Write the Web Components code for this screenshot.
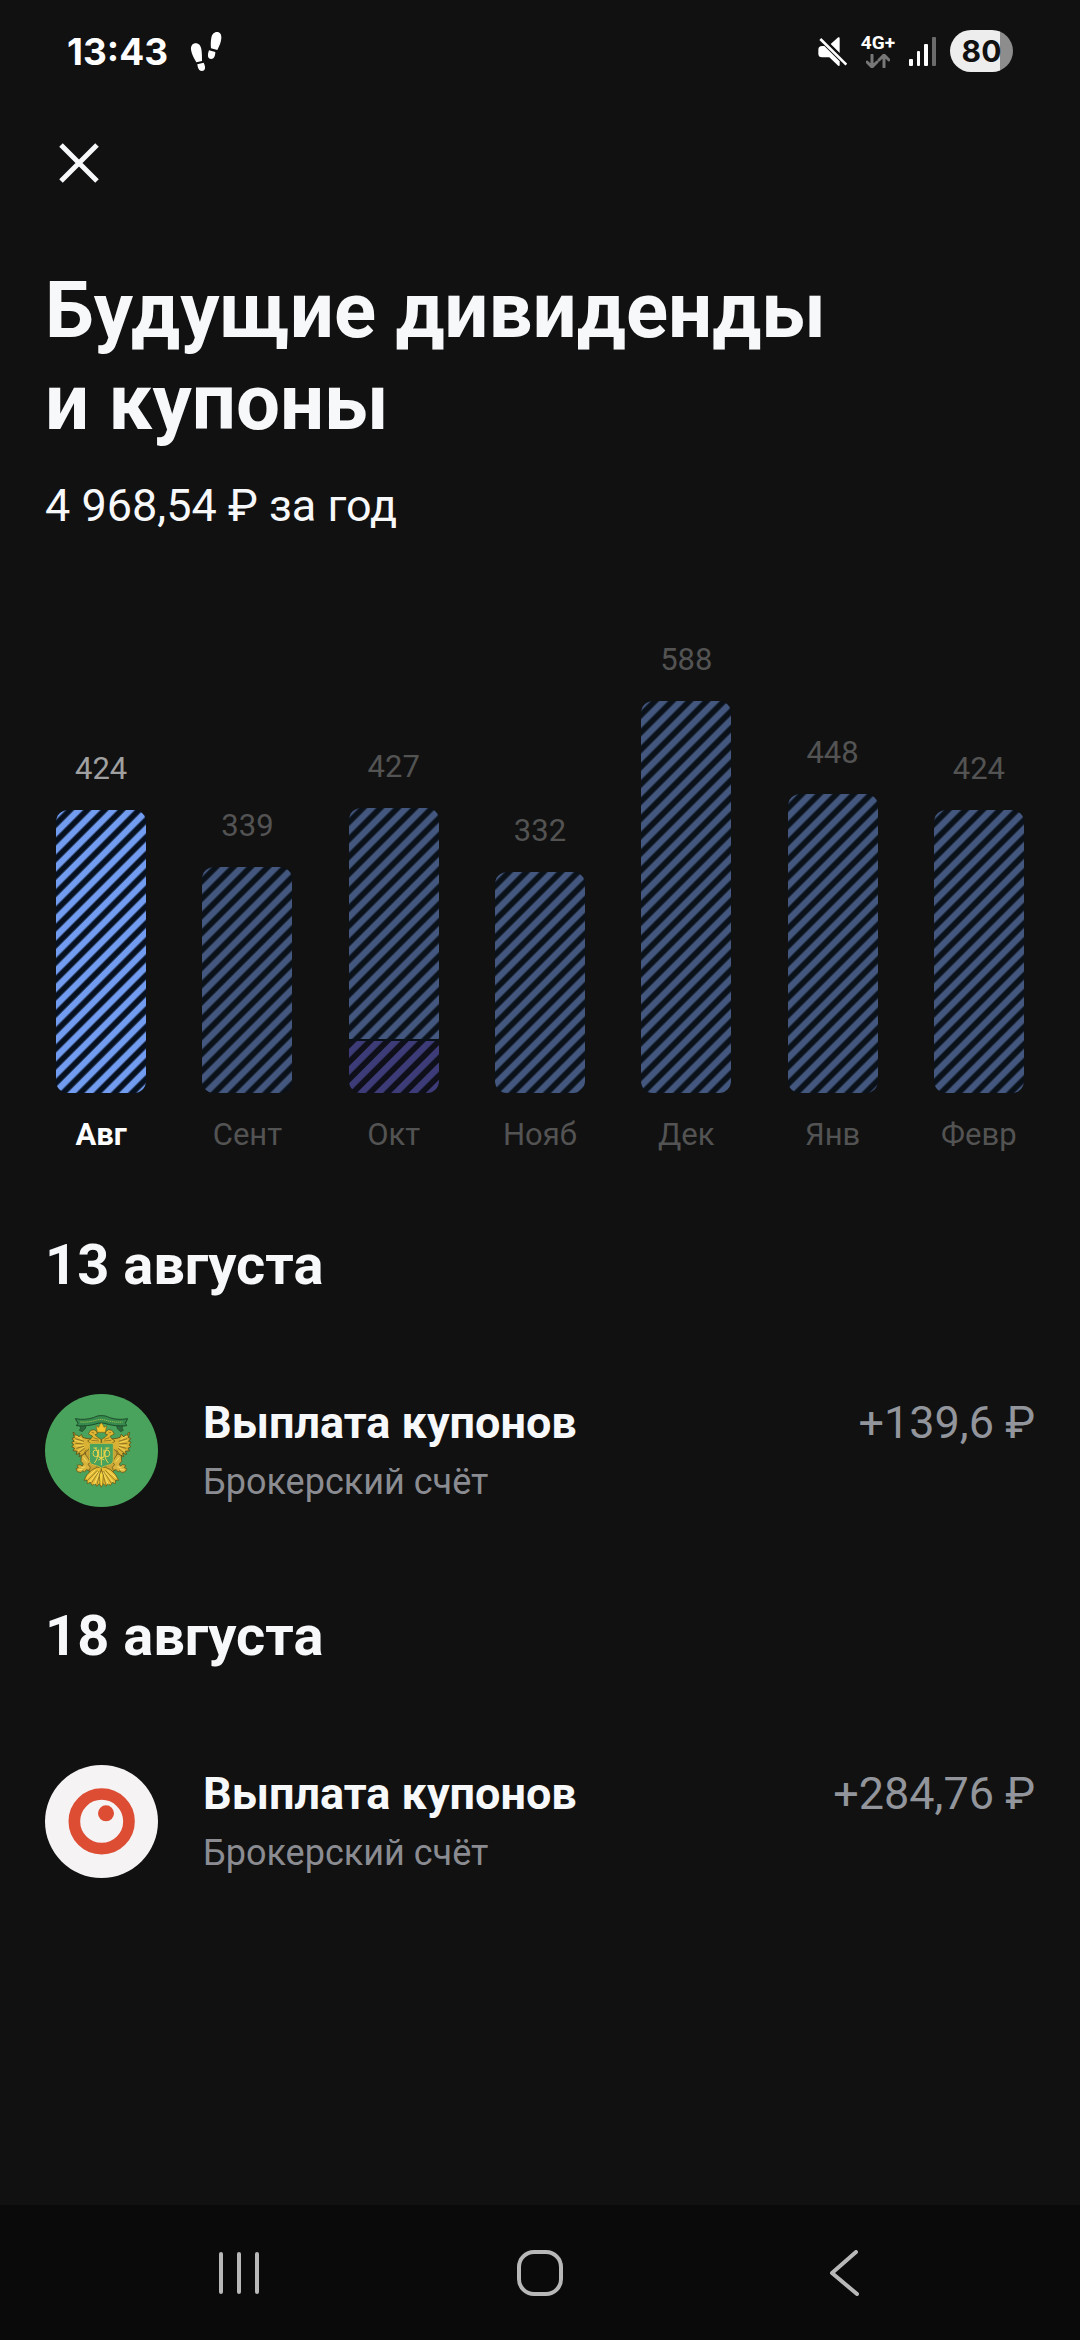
<!DOCTYPE html>
<html lang="ru">
<head>
<meta charset="utf-8">
<meta name="viewport" content="width=device-width, initial-scale=1">
<title>Будущие дивиденды и купоны</title>
<style>
  body {
    margin: 0;
    background: #111;
    color: #f7f8fa;
    font-family: Roboto, "Noto Sans", sans-serif;
  }
</style>
</head>
<body>
<dividends-page>
  <status-bar slot="status" time="13:43" battery="80"></status-bar>
  <page-header slot="header">
    Будущие дивиденды<br>и&nbsp;купоны
    <span slot="total">4&nbsp;968,54&nbsp;₽ за год</span>
  </page-header>
  <bar-chart>
    <chart-bar value="424" month="Авг" active></chart-bar>
    <chart-bar value="339" month="Сент"></chart-bar>
    <chart-bar value="427" month="Окт" dividends="78"></chart-bar>
    <chart-bar value="332" month="Нояб"></chart-bar>
    <chart-bar value="588" month="Дек"></chart-bar>
    <chart-bar value="448" month="Янв"></chart-bar>
    <chart-bar value="424" month="Февр"></chart-bar>
  </bar-chart>
  <payment-day>
    <span slot="date">13 августа</span>
    <payment-row>
      <minfin-logo slot="logo"></minfin-logo>
      Выплата купонов
      <span slot="account">Брокерский счёт</span>
      <span slot="amount">+139,6&nbsp;₽</span>
    </payment-row>
  </payment-day>
  <payment-day>
    <span slot="date">18 августа</span>
    <payment-row>
      <ring-logo slot="logo"></ring-logo>
      Выплата купонов
      <span slot="account">Брокерский счёт</span>
      <span slot="amount">+284,76&nbsp;₽</span>
    </payment-row>
  </payment-day>
  <system-nav slot="nav"></system-nav>
</dividends-page>

<script>
class DividendsPage extends HTMLElement {
  constructor () {
    super()
    this.shadow = this.attachShadow({ mode: 'open' })
  }

  connectedCallback () {
    this.render()
  }

  render () {
    this.shadow.innerHTML =
      /*html*/`
      <style>
        :host {
          display: flex;
          flex-direction: column;
          min-height: 100vh;
        }

        main {
          flex: 1;
        }
      </style>

      <slot name="status"></slot>
      <slot name="header"></slot>
      <main><slot></slot></main>
      <slot name="nav"></slot>`
  }
}

class StatusBar extends HTMLElement {
  constructor () {
    super()
    this.shadow = this.attachShadow({ mode: 'open' })
  }

  connectedCallback () {
    this.render()
  }

  render () {
    const battery = this.getAttribute('battery')

    this.shadow.innerHTML =
      /*html*/`
      <style>
        :host {
          display: flex;
          align-items: center;
          justify-content: space-between;
          height: 102px;
          padding: 0 67px;
          color: #fff;
          font-family: Inter, Roboto, sans-serif;
          font-weight: 600;
        }

        svg {
          display: block;
        }

        .left, .right {
          display: flex;
          align-items: center;
        }

        .left {
          gap: 20px;
          font-size: 37px;
          font-weight: 700;
        }

        .right {
          gap: 14px;
        }

        .network {
          display: flex;
          flex-direction: column;
          align-items: center;
          gap: 2px;
          font-family: Roboto, sans-serif;
          font-size: 19px;
          font-weight: 700;
          line-height: 18px;
        }

        .battery {
          width: 63px;
          border-radius: 21px;
          background: linear-gradient(90deg, #ededed ${battery}%, #8d8d8d ${battery}%);
          color: #111;
          font-size: 30px;
          font-weight: 700;
          line-height: 42px;
          text-align: center;
        }
      </style>

      <div class="left">
        <span>${this.getAttribute('time')}</span>
        <svg width="37" height="45" viewBox="440 60 111 135" fill="#fff" aria-hidden="true">
          <path d="M449 122c-1-13 6-19 14-19 10 0 15 7 17 17 2 12 2 23 2 36l-17 4c-7-13-14-24-16-38z"/>
          <path d="M468 166l19-5c4 8 6 17 2 22-4 4-11 4-15 0s-5-10-6-17z"/>
          <path d="M540 88c1-12-4-19-13-19s-15 7-17 17c-2 11-2 21-1 32l19 5c6-12 11-22 12-35z"/>
          <path d="M503 124l19 5c0 8-2 15-6 19-4 3-10 3-13 0-5-5-3-16 0-24z"/>
        </svg>
      </div>
      <div class="right">
        <svg width="29" height="29" viewBox="81 82 87 87" aria-hidden="true">
          <path fill="#fff" d="M119 103l21-19c3-2 6-1 6 2v44zM93 109h7l46 46v10c0 4-3 5-6 2l-25-24H93c-7 0-11-4-11-10v-13c0-7 4-11 11-11z"/>
          <path stroke="#111" stroke-width="5" d="M93 83l78 76"/>
          <path stroke="#fff" stroke-width="8" d="M88 88l78 77"/>
        </svg>
        <div class="network">
          <span>4G+</span>
          <svg width="24" height="14" viewBox="0 0 24 14" fill="none" stroke="#777" stroke-width="3" stroke-linecap="round" stroke-linejoin="round" aria-hidden="true">
            <path d="M6 1v11M1 8l5 5 5-5M18 13V2M13 6l5-5 5 5"/>
          </svg>
        </div>
        <svg width="27" height="29" viewBox="0 0 27 29" fill="#fff" aria-hidden="true">
          <rect y="22" width="4" height="7" rx="1"/>
          <rect x="8" y="14" width="3" height="15" rx="1"/>
          <rect x="15" y="7" width="4" height="22" rx="1"/>
          <rect x="23" width="4" height="29" rx="1" fill="#6b6b6b"/>
        </svg>
        <span class="battery">${battery}</span>
      </div>`
  }
}

class PageHeader extends HTMLElement {
  constructor () {
    super()
    this.shadow = this.attachShadow({ mode: 'open' })
  }

  connectedCallback () {
    this.render()
  }

  render () {
    this.shadow.innerHTML =
      /*html*/`
      <style>
        :host {
          display: block;
          padding: 19px 45px 0;
        }

        button {
          display: flex;
          align-items: center;
          justify-content: center;
          width: 84px;
          height: 84px;
          margin: 0 0 60px -8px;
          padding: 0;
          border: 0;
          background: none;
          color: inherit;
        }

        h1 {
          margin: 0 0 27px;
          font-size: 78px;
          font-weight: 700;
          line-height: 92px;
        }

        p {
          margin: 0;
          font-size: 45px;
          line-height: 60px;
        }
      </style>

      <button type="button" aria-label="Закрыть">
        <svg width="40" height="40" viewBox="0 0 40 40" fill="none" stroke="currentColor" stroke-width="5" aria-hidden="true">
          <path d="M2 2l36 36M38 2L2 38"/>
        </svg>
      </button>
      <h1><slot></slot></h1>
      <p><slot name="total"></slot></p>`
  }
}

class BarChart extends HTMLElement {
  constructor () {
    super()
    this.shadow = this.attachShadow({ mode: 'open' })
  }

  connectedCallback () {
    this.render()
  }

  render () {
    this.shadow.innerHTML =
      /*html*/`
      <style>
        :host {
          display: grid;
          grid-auto-columns: 1fr;
          grid-auto-flow: column;
          align-items: end;
          margin-top: 104px;
          padding: 0 28px;
        }
      </style>

      <slot></slot>`
  }
}

class ChartBar extends HTMLElement {
  constructor () {
    super()
    this.shadow = this.attachShadow({ mode: 'open' })
  }

  connectedCallback () {
    this.render()
  }

  // two pixels for every three roubles
  scale (value) {
    return Math.round(value * 2 / 3)
  }

  stripes (name, height, shift) {
    return /*html*/`
      <svg class="${name}" height="${height}" aria-hidden="true">
        <pattern id="${name}" width="12.2" height="12.2" patternUnits="userSpaceOnUse" patternTransform="rotate(45)">
          <rect x="${shift}" width="6.4" height="12.2"/>
        </pattern>
        <rect class="back" width="100%" height="100%"/>
        <rect width="100%" height="100%" fill="url(#${name})"/>
      </svg>`
  }

  render () {
    const value = Number(this.getAttribute('value'))
    const dividends = this.scale(Number(this.getAttribute('dividends')))
    const total = this.scale(value)
    const coupons = dividends ? total - dividends - 2 : total

    this.shadow.innerHTML =
      /*html*/`
      <style>
        :host {
          display: block;
          --value: #535353;
          --month: #535353;
          --back: #0b1119;
          --line: #43577f;
        }

        :host([active]) {
          --value: #a0a0a0;
          --month: #fff;
          --back: #07101f;
          --line: #719cf0;
        }

        button {
          display: flex;
          flex-direction: column;
          align-items: center;
          width: 100%;
          padding: 0;
          border: 0;
          background: none;
          font: inherit;
          font-size: 31px;
          line-height: 40px;
        }

        .value {
          color: var(--value);
        }

        .month {
          color: var(--month);
        }

        :host([active]) .month {
          font-weight: 700;
        }

        .bar {
          display: flex;
          flex-direction: column;
          gap: 2px;
          width: 90px;
          margin: 21px 0 22px;
          border-radius: 12px;
          background: var(--back);
          overflow: hidden;
        }

        svg {
          display: block;
          width: 100%;
        }

        svg .back {
          fill: var(--back);
        }

        pattern rect {
          fill: var(--line);
        }

        .dividends {
          --back: #0e0f18;
          --line: #3d3c78;
        }
      </style>

      <button type="button">
        <span class="value">${value}</span>
        <span class="bar">
          ${this.stripes('coupons', coupons, 0.6)}
          ${dividends ? this.stripes('dividends', dividends, 5.6) : ''}
        </span>
        <span class="month">${this.getAttribute('month')}</span>
      </button>`
  }
}

class PaymentDay extends HTMLElement {
  constructor () {
    super()
    this.shadow = this.attachShadow({ mode: 'open' })
  }

  connectedCallback () {
    this.render()
  }

  render () {
    this.shadow.innerHTML =
      /*html*/`
      <style>
        :host {
          display: block;
          padding: 76px 45px 19px;
        }

        h2 {
          margin: 0 0 95px;
          font-size: 56px;
          font-weight: 700;
          line-height: 68px;
        }
      </style>

      <section>
        <h2><slot name="date"></slot></h2>
        <slot></slot>
      </section>`
  }
}

class PaymentRow extends HTMLElement {
  constructor () {
    super()
    this.shadow = this.attachShadow({ mode: 'open' })
  }

  connectedCallback () {
    this.render()
  }

  render () {
    this.shadow.innerHTML =
      /*html*/`
      <style>
        :host {
          display: flex;
          align-items: center;
          gap: 45px;
        }

        .text {
          display: grid;
          flex: 1;
          grid-template-columns: 1fr auto;
          row-gap: 7px;
        }

        .name, .amount {
          font-size: 45px;
          line-height: 56px;
        }

        .name {
          font-weight: 700;
        }

        .amount {
          color: #92959b;
        }

        .account {
          color: #8a8c92;
          font-size: 36px;
          line-height: 48px;
        }
      </style>

      <slot name="logo"></slot>
      <div class="text">
        <span class="name"><slot></slot></span>
        <span class="amount"><slot name="amount"></slot></span>
        <span class="account"><slot name="account"></slot></span>
      </div>`
  }
}

class MinfinLogo extends HTMLElement {
  constructor () {
    super()
    this.shadow = this.attachShadow({ mode: 'open' })
  }

  connectedCallback () {
    this.render()
  }

  render () {
    this.shadow.innerHTML =
      /*html*/`
      <style>
        :host {
          display: block;
          width: 113px;
          height: 113px;
        }

        svg {
          display: block;
          width: 100%;
          height: 100%;
        }
      </style>

      <svg viewBox="15 12 339 339" stroke-linejoin="round" aria-hidden="true">
        <defs>
          <!-- left half of the eagle, mirrored for the right one -->
          <g id="half">
            <path fill="#2c6a3c" stroke="#1c4a2a" stroke-width="2" d="M116 103l22 4-2 9-10 9-8-4 4-7z"/>
            <path fill="#d9b135" stroke="#5b4c14" stroke-width="2.500" d="M99 127l6 3-1 7 8-2 4 6 8-8 4 9 10 3 15 2v13l-4 8-2 14-8 6-7 14-8 3 2-10-9 5 3-10-12 3 4-9-13-2 5-7-9-5 6-5-6-8 7-3-6-9 7-2z"/>
            <path fill="none" stroke="#6b5516" stroke-width="2" d="M106 146l26 8M106 160l25 2M109 175l23-6M115 189l19-14M126 199l13-20"/>
            <path fill="none" stroke="#f3d552" stroke-width="3" d="M105 151l25 7M107 168l25-3M113 183l20-12M106 137l21 11"/>
            <path fill="#e0b834" stroke="#5b4c14" stroke-width="2" d="M145 132l7-11 10-2 8 5 2 8-7 2 8 8 10 6v12h-31l-9-7 10-7 5-7-7-4z"/>
            <path fill="none" stroke="#775b16" stroke-width="2" d="M155 127l7 2M154 151l23 2M160 143l15 5"/>
            <path fill="#c9a435" stroke="#5b4c14" stroke-width="2" d="M137 186l11-10v32l7 12 14 8 14 10v8l-26 4-14-10-8-20z"/>
            <path fill="#d8b33c" stroke="#5b4c14" stroke-width="2" d="M124 197l11-6 9 13 7 13-7 6 7 9-3 9-9-2-5 7-6-4-5 6-11-3-4-9 7-3-4-7 9-2 7 4 3-6-7-8z"/>
            <path fill="none" stroke="#f6df67" stroke-width="3" d="M130 202l10 13M124 234l12-4M114 240l14-2"/>
            <path fill="#e6bd35" stroke="#5b4c14" stroke-width="2" d="M172 232l-17 8-14 14-9 17 9-1 1 11 9-4 5 9 9-5 5 8 8-8 6 8V232z"/>
            <path fill="none" stroke="#73601d" stroke-width="2" d="M172 241l-30 31M177 243l-23 37M181 244l-11 43"/>
            <path fill="none" stroke="#f9e068" stroke-width="3" d="M166 240l-27 24M174 245l-25 31M179 247l-16 36"/>
          </g>
        </defs>
        <circle cx="184.500" cy="181.500" r="169.500" fill="#49a35c"/>
        <use href="#half"/>
        <use href="#half" transform="matrix(-1 0 0 1 368 0)"/>
        <path fill="#368a4e" stroke="#1c4a2a" stroke-width="3" d="M106 86c20 4 38 2 54-3 10-5 15-6 24-6s16 1 25 6c16 5 33 7 54 3l-7 14c3 3 3 4 4 7-27 2-45-1-59-5-12-4-22-4-34 0-14 4-31 7-58 5l5-7z"/>
        <path fill="none" stroke="#9cc34d" stroke-width="3" stroke-dasharray="4 2" d="M121 96c25 2 39-3 50-6 9-2 17-2 27 1 12 3 28 7 50 5"/>
        <path fill="#f2c52e" stroke="#7a6418" stroke-width="2" d="M168 107l8 5 3-8 5-5 5 5 3 8 8-5-4 20h-24z"/>
        <path fill="#49a35c" stroke="#d9ba3a" stroke-width="3" d="M148 160h72v49c0 9-4 14-14 16-10 3-17 5-22 9-5-4-12-6-22-9-10-2-14-7-14-16z"/>
        <g fill="none" stroke="#eed34b" stroke-width="3">
          <path d="M166 174c10 12 10 30-3 45M202 174c-10 12-10 30 3 45"/>
          <ellipse cx="167" cy="190" rx="8" ry="10"/>
          <ellipse cx="201" cy="190" rx="8" ry="10"/>
          <path d="M184 172v54M176 178v21c0 5 16 5 16 0v-21M160 174h12M196 174h12M175 210l18-10M175 200l18 10"/>
        </g>
        <path fill="#f5d33f" stroke="#6b5516" stroke-width="2" d="M184 240l6 15-2 28-4 9-4-9-2-28z"/>
      </svg>`
  }
}

class RingLogo extends HTMLElement {
  constructor () {
    super()
    this.shadow = this.attachShadow({ mode: 'open' })
  }

  connectedCallback () {
    this.render()
  }

  render () {
    this.shadow.innerHTML =
      /*html*/`
      <style>
        :host {
          display: block;
          width: 113px;
          height: 113px;
        }

        svg {
          display: block;
          width: 100%;
          height: 100%;
        }
      </style>

      <svg viewBox="0 0 339 339" aria-hidden="true">
        <circle cx="169.500" cy="169.500" r="169.500" fill="#f5f3f4"/>
        <circle cx="170" cy="169" r="82" fill="none" stroke="#dd4d34" stroke-width="35"/>
        <circle cx="183" cy="145" r="24" fill="#dd4d34"/>
      </svg>`
  }
}

class SystemNav extends HTMLElement {
  constructor () {
    super()
    this.shadow = this.attachShadow({ mode: 'open' })
  }

  connectedCallback () {
    this.render()
  }

  render () {
    this.shadow.innerHTML =
      /*html*/`
      <style>
        :host {
          display: block;
          background: #0a0a0a;
        }

        nav {
          display: grid;
          grid-template-columns: repeat(3, 1fr);
          height: 135px;
          padding: 0 88px;
        }

        button {
          display: flex;
          align-items: center;
          justify-content: center;
          padding: 0;
          border: 0;
          background: none;
          color: #b8b8b8;
        }
      </style>

      <nav>
        <button type="button" aria-label="Недавние">
          <svg width="46" height="46" viewBox="0 0 46 46" stroke="currentColor" stroke-width="4" stroke-linecap="round" aria-hidden="true">
            <path d="M5 4v38M23 4v38M41 4v38"/>
          </svg>
        </button>
        <button type="button" aria-label="Домой">
          <svg width="46" height="46" viewBox="0 0 46 46" fill="none" stroke="currentColor" stroke-width="4" aria-hidden="true">
            <rect x="2" y="2" width="42" height="42" rx="15"/>
          </svg>
        </button>
        <button type="button" aria-label="Назад">
          <svg width="46" height="46" viewBox="0 0 46 46" fill="none" stroke="currentColor" stroke-width="4" stroke-linecap="round" stroke-linejoin="round" aria-hidden="true">
            <path d="M38 2L14 23l25 21"/>
          </svg>
        </button>
      </nav>`
  }
}

customElements.define('dividends-page', DividendsPage)
customElements.define('status-bar', StatusBar)
customElements.define('page-header', PageHeader)
customElements.define('bar-chart', BarChart)
customElements.define('chart-bar', ChartBar)
customElements.define('payment-day', PaymentDay)
customElements.define('payment-row', PaymentRow)
customElements.define('minfin-logo', MinfinLogo)
customElements.define('ring-logo', RingLogo)
customElements.define('system-nav', SystemNav)
</script>
</body>
</html>
